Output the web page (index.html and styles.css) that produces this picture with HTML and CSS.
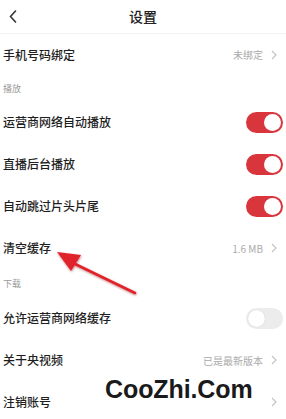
FILE: index.html
```html
<!DOCTYPE html>
<html lang="zh-CN">
<head>
<meta charset="utf-8">
<title>设置</title>
<link rel="stylesheet" href="styles.css">
</head>
<body>
<div class="page">
  <header class="topbar">
    <svg class="back" width="8" height="13" viewBox="0 0 8 13"><path d="M6.5 1 L1.5 6.5 L6.5 12" fill="none" stroke="#333" stroke-width="1.6" stroke-linecap="round" stroke-linejoin="round"/></svg>
    <h1 class="title">设置</h1>
  </header>

  <div class="row">
    <span class="label">手机号码绑定</span>
    <span class="value">未绑定<svg class="chev" width="6" height="10" viewBox="0 0 6 10"><path d="M1 1 L5 5 L1 9" fill="none" stroke="#c4c4c4" stroke-width="1.2"/></svg></span>
  </div>

  <div class="section">播放</div>
  <div class="row">
    <span class="label">运营商网络自动播放</span>
    <span class="toggle on"><span class="knob"></span></span>
  </div>
  <div class="row">
    <span class="label">直播后台播放</span>
    <span class="toggle on"><span class="knob"></span></span>
  </div>
  <div class="row">
    <span class="label">自动跳过片头片尾</span>
    <span class="toggle on"><span class="knob"></span></span>
  </div>
  <div class="row">
    <span class="label">清空缓存</span>
    <span class="value">1.6 MB<svg class="chev" width="6" height="10" viewBox="0 0 6 10"><path d="M1 1 L5 5 L1 9" fill="none" stroke="#c4c4c4" stroke-width="1.2"/></svg></span>
  </div>

  <div class="section section2">下载</div>
  <div class="row">
    <span class="label">允许运营商网络缓存</span>
    <span class="toggle off"><span class="knob"></span></span>
  </div>
  <div class="row">
    <span class="label">关于央视频</span>
    <span class="value">已是最新版本<svg class="chev" width="6" height="10" viewBox="0 0 6 10"><path d="M1 1 L5 5 L1 9" fill="none" stroke="#c4c4c4" stroke-width="1.2"/></svg></span>
  </div>
  <div class="row">
    <span class="label">注销账号</span>
    <span class="value"><svg class="chev" width="6" height="10" viewBox="0 0 6 10"><path d="M1 1 L5 5 L1 9" fill="none" stroke="#c4c4c4" stroke-width="1.2"/></svg></span>
  </div>

  <svg class="arrow" width="100" height="60" viewBox="0 0 100 60">
    <defs>
      <filter id="sh" x="-20%" y="-20%" width="140%" height="140%">
        <feDropShadow dx="0.5" dy="1" stdDeviation="1" flood-color="#800" flood-opacity="0.5"/>
      </filter>
    </defs>
    <g filter="url(#sh)">
      <line x1="22" y1="14" x2="84" y2="44" stroke="#e0242b" stroke-width="2.6" stroke-linecap="round"/>
      <polygon points="6,3 30,6 20,22" fill="#e0242b"/>
    </g>
  </svg>

  <div class="watermark">CooZhi.Com</div>
</div>
</body>
</html>
```

FILE: styles.css
```css
* { box-sizing: border-box; margin: 0; padding: 0; }
html, body { background: #fff; }
body {
  font-family: "Noto Sans CJK SC", "Noto Sans", "Liberation Sans", sans-serif;
  color: #222;
  width: 286px;
  height: 419px;
  overflow: hidden;
}
.page { position: relative; width: 286px; height: 419px; }

.topbar {
  height: 34px;
  display: flex;
  align-items: center;
  justify-content: center;
  position: relative;
  border-bottom: 1px solid #f2f2f2;
}
.back { position: absolute; left: 9px; top: 10px; }
.title { font-size: 14px; font-weight: 500; color: #222; line-height: 1; margin-top: -1px; }

.row {
  height: 42px;
  display: flex;
  align-items: center;
  justify-content: space-between;
  padding: 0 3px 0 3px;
}
.row:first-of-type { height: 41px; }
.label { font-size: 12px; font-weight: 500; color: #1e1e1e; line-height: 1; }
.value {
  display: flex;
  align-items: center;
  gap: 8px;
  font-size: 10px;
  color: #aaa;
  padding-right: 6px;
  font-family: "Noto Sans CJK SC", "Liberation Sans", sans-serif;
}
.chev { display: block; }

.section {
  height: 26px;
  display: flex;
  align-items: center;
  padding-left: 3px;
  font-size: 9px;
  color: #9a9a9a;
}
.section2 { height: 28px; }

.toggle {
  width: 37px;
  height: 21px;
  border-radius: 11px;
  position: relative;
  display: block;
}
.toggle.on { background: #d9353c; }
.toggle.off { background: #ececec; }
.knob {
  position: absolute;
  top: 2px;
  width: 17px;
  height: 17px;
  border-radius: 50%;
  background: #fff;
}
.toggle.on .knob { right: 2px; }
.toggle.off .knob { left: 2px; box-shadow: 0 0 1px rgba(0,0,0,0.2); }

.arrow { position: absolute; left: 51px; top: 249px; }

.watermark {
  position: absolute;
  left: 105px;
  top: 377px;
  font-family: "Liberation Sans", Arial, sans-serif;
  font-weight: 700;
  font-size: 25px;
  color: #1a1a1a;
  letter-spacing: -0.1px;
  line-height: 1;
}
```
